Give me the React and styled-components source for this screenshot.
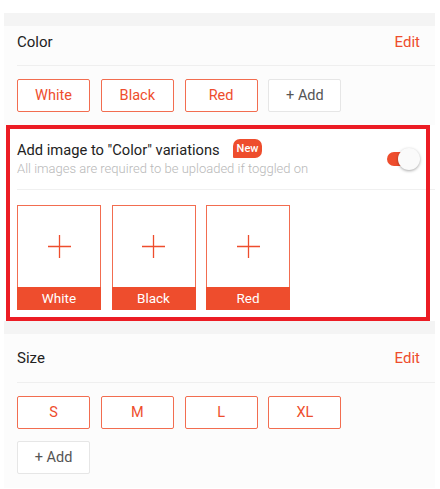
import React from "react";
import styled, { createGlobalStyle } from "styled-components";

const ORANGE = "#ee4d2d";

const GlobalStyle = createGlobalStyle`
  html, body {
    margin: 0;
    padding: 0;
    background: #ffffff;
    font-family: Roboto, "Liberation Sans", sans-serif;
  }
  * {
    box-sizing: border-box;
  }
`;

const Page = styled.div`
  width: 440px;
  padding: 13px 5px 0 4px;
`;

const Band = styled.div`
  height: 13px;
  background: #f4f4f4;
`;

const Section = styled.section`
  background: #fcfcfc;
  padding-left: 13px;
`;

const Header = styled.div`
  display: flex;
  align-items: center;
  justify-content: space-between;
  height: ${(p) => p.$height}px;
  padding: 0 15px ${(p) => p.$lift || 0}px 0;
  border-bottom: 1px solid #efefef;
`;

const Title = styled.h2`
  margin: 0;
  font-size: 15px;
  font-weight: 400;
  color: #222;
`;

const EditLink = styled.a`
  font-size: 15px;
  color: ${ORANGE};
  text-decoration: none;
`;

const ChipGrid = styled.div`
  display: flex;
  flex-wrap: wrap;
  gap: 12px 10.8px;
  max-width: 330px;
  padding: 13px 0 ${(p) => p.$bottom}px;
`;

const Chip = styled.button`
  width: 73px;
  height: 33px;
  padding: 0;
  border-radius: 2px;
  font-family: inherit;
  font-size: 14.5px;
  border: 1px solid ${(p) => (p.$ghost ? "#e6e6e6" : "#f26d50")};
  color: ${(p) => (p.$ghost ? "#555" : ORANGE)};
  background: #ffffff;
`;

const Highlighted = styled.div`
  position: relative;
  background: #ffffff;
  padding-left: 13px;
`;

const Frame = styled.div`
  position: absolute;
  left: 2px;
  top: 0;
  right: 5px;
  bottom: 0;
  border: 4.5px solid #ec1c24;
  pointer-events: none;
`;

const ToggleRow = styled.div`
  display: flex;
  align-items: center;
  justify-content: space-between;
  padding: 15px 15px 12px 0;
  border-bottom: 1px solid #f0f0f0;
`;

const ToggleText = styled.div`
  display: flex;
  flex-direction: column;
`;

const ToggleTitle = styled.div`
  display: flex;
  align-items: flex-start;
  font-size: 14.7px;
  line-height: 20px;
  color: #222;
`;

const Badge = styled.span`
  margin: -1px 0 0 13px;
  height: 19px;
  padding: 0 4px;
  border-radius: 7px 7px 7px 1px;
  background: ${ORANGE};
  color: #fff;
  font-size: 11px;
  font-weight: 500;
  line-height: 19px;
`;

const Hint = styled.div`
  font-size: 13px;
  line-height: 17px;
  color: #b8b8b8;
  font-weight: 300;
`;

const Switch = styled.div`
  position: relative;
  width: 33px;
  height: 22px;
  &::before {
    content: "";
    position: absolute;
    left: 0;
    top: 4px;
    width: 25px;
    height: 14px;
    border-radius: 7px;
    background: ${ORANGE};
  }
`;

const Knob = styled.span`
  position: absolute;
  right: 0;
  top: 0;
  width: 22px;
  height: 22px;
  border-radius: 50%;
  background: #fafafa;
  box-shadow: 0 1px 3px rgba(0, 0, 0, 0.35);
`;

const TileRow = styled.div`
  display: flex;
  gap: 10.5px;
  padding: 15px 0 11px;
`;

const Tile = styled.div`
  display: flex;
  flex-direction: column;
  width: 84px;
  height: 105px;
  border: 1px solid #f26d50;
  background: #fff;
`;

const TileBody = styled.div`
  flex: 1;
  display: flex;
  align-items: center;
  justify-content: center;
`;

const TileLabel = styled.div`
  height: 23px;
  margin: 0 -1px -1px;
  background: ${ORANGE};
  color: #fff;
  font-size: 13.5px;
  line-height: 23px;
  text-align: center;
`;

const Plus = () => (
  <svg width="23" height="23" viewBox="0 0 23 23">
    <path d="M11.5 0v23M0 11.5h23" stroke={ORANGE} strokeWidth="1.3" fill="none" />
  </svg>
);

const colors = ["White", "Black", "Red"];
const sizes = ["S", "M", "L", "XL"];

export default function App() {
  return (
    <Page>
      <GlobalStyle />
      <Band />
      <Section>
        <Header $height={40} $lift={7}>
          <Title>Color</Title>
          <EditLink>Edit</EditLink>
        </Header>
        <ChipGrid $bottom={13}>
          {colors.map((c) => (
            <Chip key={c}>{c}</Chip>
          ))}
          <Chip $ghost>+ Add</Chip>
        </ChipGrid>
      </Section>
      <Highlighted>
        <ToggleRow>
          <ToggleText>
            <ToggleTitle>
              Add image to "Color" variations
              <Badge>New</Badge>
            </ToggleTitle>
            <Hint>All images are required to be uploaded if toggled on</Hint>
          </ToggleText>
          <Switch>
            <Knob />
          </Switch>
        </ToggleRow>
        <TileRow>
          {colors.map((c) => (
            <Tile key={c}>
              <TileBody>
                <Plus />
              </TileBody>
              <TileLabel>{c}</TileLabel>
            </Tile>
          ))}
        </TileRow>
        <Frame />
      </Highlighted>
      <Band />
      <Section>
        <Header $height={49}>
          <Title>Size</Title>
          <EditLink>Edit</EditLink>
        </Header>
        <ChipGrid $bottom={14}>
          {sizes.map((s) => (
            <Chip key={s}>{s}</Chip>
          ))}
          <Chip $ghost>+ Add</Chip>
        </ChipGrid>
      </Section>
    </Page>
  );
}
